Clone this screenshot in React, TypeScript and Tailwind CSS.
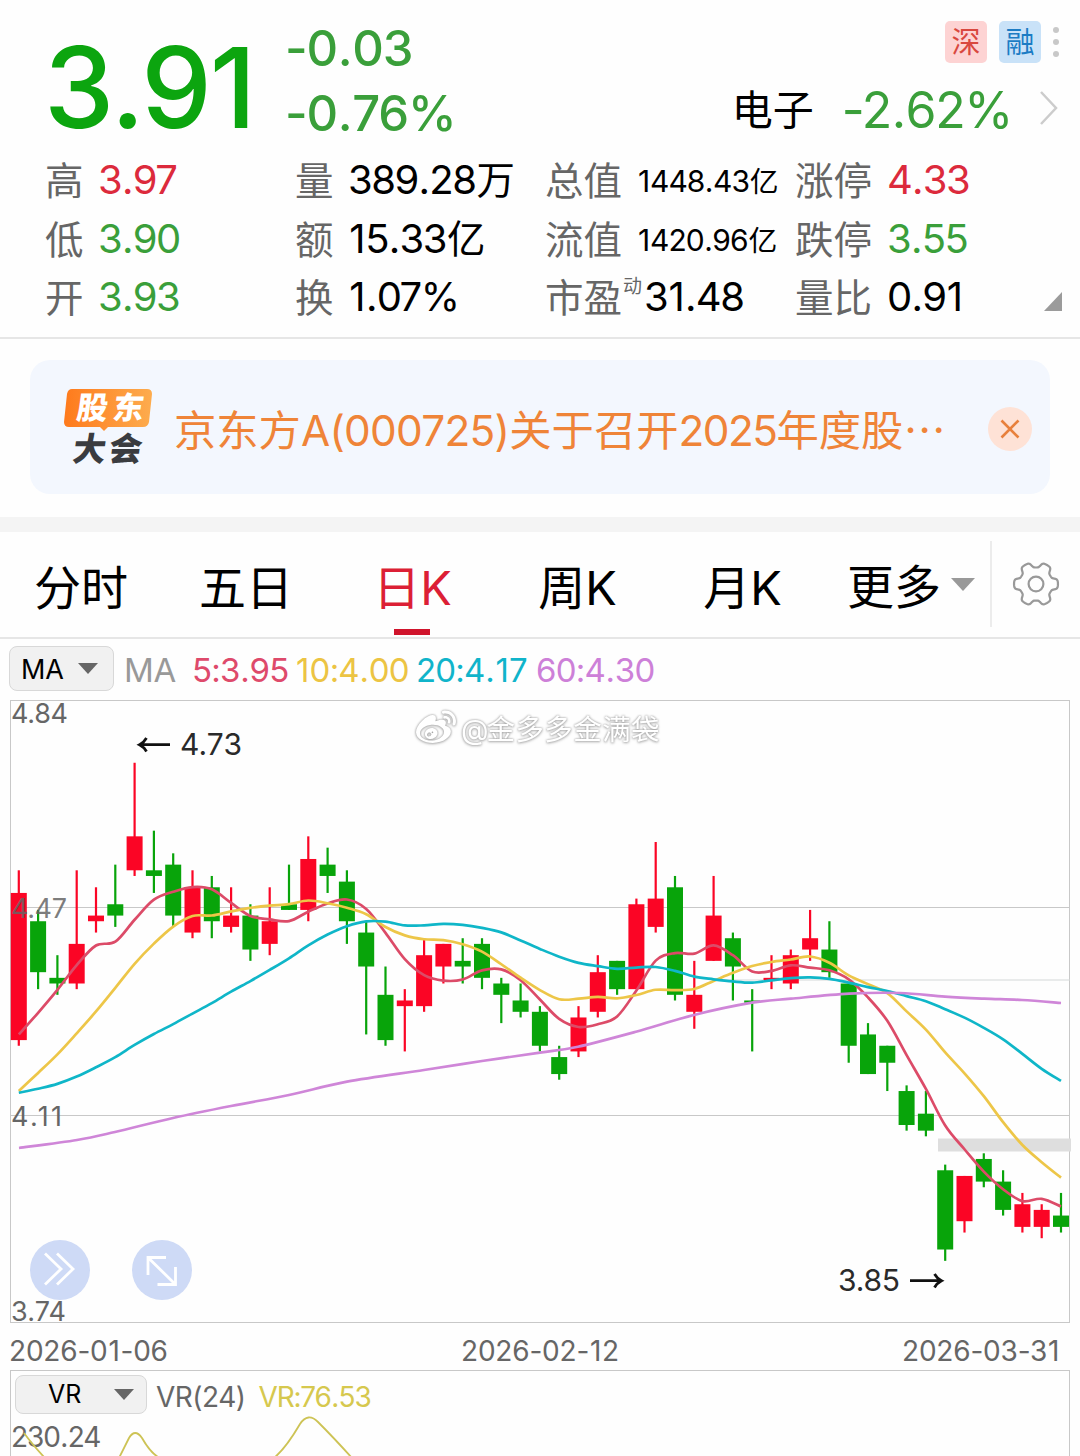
import type { ReactNode } from 'react'
import { FaWeibo } from 'react-icons/fa'

// ── Types ────────────────────────────────────────────────────────────────────

// open, close, high, low (in cents)
type Candle = [number, number, number, number]

interface Stat {
  label: string
  value: ReactNode
  color: string
}

// ── Data ─────────────────────────────────────────────────────────────────────

const CANDLES: Candle[] = [
  [424, 450, 454, 423], [445, 436, 447, 433], [435, 434, 439, 432], [434, 441, 454, 433],
  [445, 446, 451, 443], [448, 446, 455, 444], [454, 460, 473, 453], [454, 453, 461, 450],
  [455, 446, 457, 444], [443, 451, 454, 442], [451, 445, 453, 442], [444, 446, 451, 443],
  [446, 440, 448, 438], [441, 445, 451, 439], [448, 447, 455, 447], [447, 456, 460, 445],
  [455, 453, 458, 450], [452, 445, 454, 441], [443, 437, 445, 425], [432, 424, 437, 423],
  [430, 431, 433, 422], [430, 439, 442, 429], [437, 441, 441, 434], [438, 437, 442, 434],
  [441, 435, 442, 433], [434, 432, 435, 427], [431, 429, 434, 428], [429, 423, 430, 422],
  [421, 418, 423, 417], [422, 428, 430, 421], [429, 436, 439, 428], [438, 433, 438, 432],
  [433, 448, 449, 433], [444, 449, 459, 443], [451, 432, 453, 431], [429, 432, 438, 426],
  [438, 446, 453, 438], [442, 437, 443, 431], [431, 430.6, 433, 422], [434.6, 435, 439, 433],
  [434, 439, 440, 433], [440, 442, 447, 438], [440, 436, 445, 435], [434, 423, 434, 420],
  [425, 418, 427, 418], [423, 420, 423, 415], [415, 409, 416, 408], [411, 408, 415, 407],
  [401, 387, 402, 385], [392, 400, 400, 390], [403, 399, 404, 398], [399, 394, 401, 393],
  [391, 395, 397, 390], [391, 394, 395, 389], [393, 391, 397, 390],
]

// averages that need closes from before the visible range
const MA5_HEAD = [425, 428.8, 432.8, 437.3]
const MA10_HEAD = [415, 418.2, 421.4, 425.2, 429, 433.2, 437.6, 441.1, 444.2]
const MA20_HEAD = [
  414.7, 415.4, 416.2, 417.5, 419.2, 420.9, 423.2, 425.1, 426.8, 428.7,
  430.5, 432.6, 434.4, 436.4, 438.4, 440.8, 442.7, 444.2, 445.1,
]

const MA60: [number, number][] = [
  [19, 1148], [77, 1140], [115, 1132], [173, 1118], [231, 1106], [289, 1095], [347, 1081.7],
  [424, 1070], [482, 1061], [540, 1052.7], [578, 1046.7], [636, 1031.7], [694, 1015],
  [752, 1002.7], [791, 998.7], [849, 993.7], [900, 993], [945, 996.7], [984, 998.7],
  [1022, 1000], [1061, 1003],
]

const RED = 'text-[#dc2a3c]'
const GREEN = 'text-[#3a9f3a]'

const STATS: Stat[][] = [
  [
    { label: '高', value: <Num v="3.97" />, color: RED },
    { label: '量', value: <><Num v="389.28" /><Unit>万</Unit></>, color: 'text-black' },
    { label: '总值', value: <Small><Num v="1448.43" /><Unit>亿</Unit></Small>, color: 'text-black' },
    { label: '涨停', value: <Num v="4.33" />, color: RED },
  ],
  [
    { label: '低', value: <Num v="3.90" />, color: GREEN },
    { label: '额', value: <><Num v="15.33" /><Unit>亿</Unit></>, color: 'text-black' },
    { label: '流值', value: <Small><Num v="1420.96" /><Unit>亿</Unit></Small>, color: 'text-black' },
    { label: '跌停', value: <Num v="3.55" />, color: GREEN },
  ],
  [
    { label: '开', value: <Num v="3.93" />, color: GREEN },
    { label: '换', value: <Num v="1.07%" />, color: 'text-black' },
    { label: '市盈', value: <PeValue />, color: 'text-black' },
    { label: '量比', value: <Num v="0.91" />, color: 'text-black' },
  ],
]

// ── Main Component ───────────────────────────────────────────────────────────

export default function App() {
  return (
    <div className="w-[1080px] h-[1456px] overflow-hidden bg-[#fefefe] font-['Inter','Noto_Sans_CJK_SC',sans-serif] text-black whitespace-nowrap">
      <QuoteHeader />
      <Notice />
      <div className="h-[15px] bg-[#f4f4f4]" />
      <PeriodTabs />
      <MaLegend />
      <CandleChart />
      <div className="flex h-[46px] pl-[9px] pt-[13px] text-[28px] leading-[28px] tracking-[-0.2px] text-[#666]">
        <span className="w-[452px]"><Num v="2026-01-06" /></span>
        <span className="w-[441px]"><Num v="2026-02-12" /></span>
        <Num v="2026-03-31" />
      </div>
      <VrPanel />
    </div>
  )
}

// ── Header ───────────────────────────────────────────────────────────────────

function QuoteHeader() {
  return (
    <header className="h-[339px] border-b-2 border-[#e6e6e6]">
      <div className="flex h-[151px] pl-[44px]">
        <div className="w-[241px] pt-[31px] text-[112px] leading-[112px] font-medium tracking-[-5.5px] text-[#0ca50f]">
          <Num v="3.91" />
        </div>
        <div className="pt-[24px] text-[49px] leading-[50px] font-medium tracking-[-1.2px] text-[#3a9f3a]">
          <div><Num v="-0.03" /></div>
          <div className="mt-[15px]"><Num v="-0.76%" /></div>
        </div>
        <div className="ml-auto pt-[21px] pr-[21px]">
          <div className="flex justify-end items-center">
            <Badge className="bg-[#fdd3d3] text-[#d9483f]">深</Badge>
            <Badge className="ml-[12px] bg-[#c9e2f8] text-[#1c7cc4]">融</Badge>
            <div className="flex flex-col gap-[6px] ml-[12px]">
              <i className="size-[6px] rounded-full bg-[#c8c8c8]" />
              <i className="size-[6px] rounded-full bg-[#c8c8c8]" />
              <i className="size-[6px] rounded-full bg-[#c8c8c8]" />
            </div>
          </div>
          <div className="flex items-center mt-[22px] h-[50px]">
            <span className="text-[41px] leading-[50px]">电子</span>
            <span className="ml-[28px] text-[50px] leading-[50px] tracking-[-1.4px] text-[#3a9f3a]"><Num v="-2.62%" /></span>
            <svg className="ml-[27px] -mt-[5px]" width="20" height="36" viewBox="0 0 20 36">
              <path d="M2 2 L17 18 L2 34" fill="none" stroke="#ccc" strokeWidth="2.5" />
            </svg>
          </div>
        </div>
      </div>
      <div className="flex">
        <div className="grid grid-rows-[59px_59px_58px]">
          {STATS.map((row, i) => (
            <div key={i} className="grid grid-cols-[250px_250px_250px_240px] pl-[45px]">
              {row.map((s, j) => (
                <div key={s.label} className="flex items-center">
                  <span className={`${j < 2 ? 'w-[53px]' : 'w-[92px]'} text-[38.5px] leading-[58px] text-[#666]`}>{s.label}</span>
                  <span className={`-mt-[2px] text-[40px] leading-[58px] tracking-[-1.5px] ${s.color}`}>{s.value}</span>
                </div>
              ))}
            </div>
          ))}
        </div>
        <svg className="ml-[9px] mt-[141px] shrink-0" width="18" height="19" viewBox="0 0 18 19">
          <path d="M18 0 V19 H0 Z" fill="#9b9b9b" />
        </svg>
      </div>
    </header>
  )
}

// Figures with a little extra room around the point and the narrow "1"
function Num({ v }: { v: string }) {
  return (
    <span>
      {v.split('').map((ch, i) =>
        ch === '.' ? <span key={i} className="px-[0.018em]">.</span>
          : ch === '1' ? <span key={i} className="px-[0.03em]">1</span>
          : ch
      )}
    </span>
  )
}

function Badge({ className, children }: { className: string; children: ReactNode }) {
  return (
    <span className={`flex items-center justify-center w-[42px] h-[42px] rounded-[5px] text-[29px] leading-none ${className}`}>
      {children}
    </span>
  )
}

function Unit({ children }: { children: ReactNode }) {
  return <span className="ml-[0.03em] tracking-normal text-[0.96em]">{children}</span>
}

function Small({ children }: { children: ReactNode }) {
  return <span className="text-[30px] tracking-[-1px]">{children}</span>
}

function PeValue() {
  return (
    <span className="flex -ml-[14px]">
      <span className="w-[21px] -mt-[10px] text-[19px] tracking-normal text-[#666]">动</span>
      <Num v="31.48" />
    </span>
  )
}

// ── Notice ───────────────────────────────────────────────────────────────────

function Notice() {
  return (
    <div className="h-[178px] pt-[21px] px-[30px]">
      <div className="flex items-center h-[134px] pt-[3px] pl-[34px] pr-[18px] rounded-[20px] bg-[#f3f7fe] text-[#ef8438]">
        <svg width="90" height="84" viewBox="0 0 90 84">
          <defs>
            <linearGradient id="tag" x1="0" x2="1">
              <stop offset="0" stopColor="#fe7a1c" />
              <stop offset="1" stopColor="#fdac4e" />
            </linearGradient>
          </defs>
          <path d="M8 2 H83 Q88 2 88 7 L85 35 Q84 40 79 40 H44 L40 44 L36 40 H5 Q0 40 0 35 L3 7 Q4 2 8 2 Z" fill="url(#tag)" />
          <text x="12" y="32" transform="skewX(-8) translate(4 0)" fontSize="31" fontWeight="900" fill="#fff" textLength="67">股东</text>
          <text x="9" y="74" transform="skewX(-8) translate(9 0)" fontSize="33" fontWeight="900" fill="#3a3c40" textLength="69">大会</text>
        </svg>
        <div className="ml-[20px] mt-[5px] text-[42.3px] leading-[60px]">
          京东方<span className="tracking-[-0.7px]">A(000725)</span>关于召开<span className="tracking-[-1.5px]">2025</span>年度股⋯
        </div>
        <span className="flex items-center justify-center size-[44px] ml-auto rounded-full bg-[#fee2d6]">
          <svg width="20" height="20" viewBox="0 0 20 20">
            <path d="M1.5 1.5 L18.5 18.5 M18.5 1.5 L1.5 18.5" stroke="#e8803c" strokeWidth="2.6" />
          </svg>
        </span>
      </div>
    </div>
  )
}

// ── Tabs ─────────────────────────────────────────────────────────────────────

function PeriodTabs() {
  return (
    <nav className="flex h-[107px] border-b-2 border-[#e6e6e6] text-[47px] leading-[112px]">
      <span className="w-[165px] pl-[34px]">分时</span>
      <span className="w-[165px] pl-[34px]">五日</span>
      <span className="relative w-[165px] text-center text-[#dc1f35]">
        日K
        <i className="absolute left-[64px] bottom-[2px] w-[36px] h-[6px] bg-[#d0142c]" />
      </span>
      <span className="w-[165px] text-center">周K</span>
      <span className="w-[165px] text-center">月K</span>
      <span className="flex items-center w-[165px] pl-[22px]">
        <span className="mt-[4px]">更多</span>
        <svg className="ml-[10px]" width="24" height="13" viewBox="0 0 24 13">
          <path d="M0 0 H24 L12 13 Z" fill="#999" />
        </svg>
      </span>
      <span className="flex items-center justify-center w-[90px] h-[86px] mt-[9px] border-l-2 border-[#ececec]">
        <Gear />
      </span>
    </nav>
  )
}

function Gear() {
  const pts: string[] = []
  for (let d = 0; d < 360; d += 3) {
    const t = (d * Math.PI) / 180
    const r = 19.2 + 2.8 * Math.tanh(2.2 * Math.cos(6 * t) + 0.3)
    pts.push(`${(24 + r * Math.cos(t)).toFixed(2)} ${(24 + r * Math.sin(t)).toFixed(2)}`)
  }
  return (
    <svg width="48" height="48" viewBox="0 0 48 48" fill="none" stroke="#999" strokeWidth="2.2" strokeLinejoin="round">
      <path d={`M${pts.join('L')}Z`} />
      <circle cx="24" cy="24" r="7.4" />
    </svg>
  )
}

// ── MA legend ────────────────────────────────────────────────────────────────

function MaLegend() {
  return (
    <div className="flex items-center h-[61px] pt-[2px] pl-[9px] text-[33px] leading-[59px] tracking-[-0.8px]">
      <span className="flex items-center w-[105px] h-[45px] -mt-[4px] pt-[2px] pl-[11px] rounded-[8px] border border-[#d8d8d8] bg-[#f1f1f1] text-[27px] tracking-[-0.2px]">
        MA
        <Caret className="ml-[14px] mb-[2px]" />
      </span>
      <span className="w-[69px] pl-[10px] tracking-[-0.3px] text-[#999]">MA</span>
      <span className="w-[103px] pl-[9px] text-[#de4a6b]"><Num v="5:3.95" /></span>
      <span className="w-[121px] pl-[9px] text-[#ecc443]"><Num v="10:4.00" /></span>
      <span className="w-[120px] pl-[9px] text-[#10b4ca]"><Num v="20:4.17" /></span>
      <span className="pl-[9px] text-[#cd80d8]"><Num v="60:4.30" /></span>
    </div>
  )
}

function Caret({ className }: { className: string }) {
  return (
    <svg className={className} width="20" height="11" viewBox="0 0 20 11">
      <path d="M0 0 H20 L10 11 Z" fill="#666" />
    </svg>
  )
}

// ── Candle chart ─────────────────────────────────────────────────────────────

function CandleChart() {
  const closes = CANDLES.map(c => c[1])
  const line = (head: number[], n: number) =>
    smooth(soften(movingAverage(head, closes, n)).map((v, i) => [xAt(i), yAt(v)]))

  return (
    <div className="relative h-[624px]">
      <svg className="overflow-visible" width="1080" height="624" viewBox="0 700 1080 624">
        <g fill="none" stroke="#c8c8c8" strokeWidth="1">
          <rect x="10.5" y="700.5" width="1059" height="622" />
          <path d="M10 907.5 H1070 M10 1115.5 H1070" />
          <path d="M720 980 H1070" stroke="#d4d8d8" />
        </g>
        <rect x="938" y="1138.5" width="133" height="13" fill="#dedede" />

        {/* Candles */}
        {CANDLES.map(([open, close, high, low], i) => {
          const color = close > open ? '#fb0525' : '#08a40a'
          const x = xAt(i)
          const top = yAt(Math.max(open, close))
          return (
            <g key={i} fill={color}>
              <rect x={x - 1.1} y={yAt(high)} width={2.2} height={yAt(low) - yAt(high)} />
              <rect x={x - 8} y={top} width={16} height={yAt(Math.min(open, close)) - top} />
            </g>
          )
        })}

        {/* Averages */}
        <g fill="none" strokeWidth="2.7">
          <path d={line(MA5_HEAD, 5)} stroke="#dc4b68" />
          <path d={line(MA10_HEAD, 10)} stroke="#edc648" />
          <path d={line(MA20_HEAD, 20)} stroke="#0fb6c8" />
          <path d={smooth(MA60)} stroke="#cf86d8" />
        </g>

        {/* Axis labels */}
        <g fontSize="27" fill="#666">
          <text x="11" y="722.500" textLength="57">4.84</text>
          <text x="11" y="917.5" textLength="56" fillOpacity="0.85">4.47</text>
          <text x="11" y="1126" textLength="51">4.11</text>
          <text x="11" y="1321" textLength="55">3.74</text>
        </g>
        <g fontSize="30" fill="#2a2a2a">
          <text x="180" y="754.500" textLength="62">4.73</text>
          <text x="838" y="1290.500" textLength="62">3.85</text>
        </g>
        <g fill="none" stroke="#111" strokeWidth="2.7">
          <path d="M170 744.7 H140 M146.500 738 Q144 742.5 139.500 744.7 Q144 747 146.500 751.500" />
          <path d="M910 1280.7 H941 M934.500 1274 Q937 1278.500 941.500 1280.7 Q937 1283 934.500 1287.500" />
        </g>

        {/* Overlay buttons */}
        <g fill="none" stroke="#fff" strokeWidth="2.8">
          <circle cx="60" cy="1270" r="30" fill="#cedaf6" stroke="none" />
          <circle cx="162" cy="1270" r="30" fill="#cedaf6" stroke="none" />
          <path d="M45 1253.500 L61 1269 L45 1284.500 M57 1253.500 L73 1269 L57 1284.500" />
          <path d="M148 1275 V1257.500 H166 M148 1257.500 L175.500 1284.500 M175.500 1267 V1284.500 H157.500" />
        </g>
      </svg>

      {/* Watermark */}
      <div className="absolute left-[416px] top-[10px] flex items-center text-[28.5px] leading-[40px] text-white [filter:drop-shadow(0_0_1px_#999)_drop-shadow(0_1px_1px_#ccc)]">
        <FaWeibo size={40} className="mr-[5px] -mt-[4px]" />
        <span className="tracking-[-2px]">@</span><span className="tracking-[0.4px]">金多多金满袋</span>
      </div>
    </div>
  )
}

// ── VR panel ─────────────────────────────────────────────────────────────────

function VrPanel() {
  return (
    <div className="relative h-[86px] ml-[10px] mr-[10px] border border-b-0 border-[#c8c8c8] text-[28px] text-[#666]">
      <div className="flex items-center h-[51px] pl-[4px]">
        <span className="flex items-center w-[132px] h-[39px] -mt-[4px] pt-px pl-[32px] rounded-[8px] border border-[#d8d8d8] bg-[#f1f1f1] text-[25px] text-black">
          VR
          <Caret className="ml-[33px] mb-[2px]" />
        </span>
        <span className="ml-[9px] tracking-[-0.5px]">VR(24)</span>
        <span className="ml-[13px] tracking-[-1.2px] text-[#d6c84e]"><Num v="VR:76.53" /></span>
      </div>
      <div className="leading-[30px] tracking-[-1.1px]"><Num v="230.24" /></div>
      <svg className="absolute left-0 top-0" width="1058" height="86" viewBox="11 1371 1058 86" fill="none" stroke="#cdc355" strokeWidth="1.8">
        <path d="M24 1433 Q32 1444 44 1457" />
        <path d="M119 1458 L129 1438 Q135 1428 142 1438 Q150 1452 158 1457" />
        <path d="M274 1458 Q286 1448 300 1424 Q308 1412 318 1422 Q334 1438 352 1458" />
      </svg>
    </div>
  )
}

// ── Helpers ──────────────────────────────────────────────────────────────────

function xAt(i: number): number {
  return 18.8 + i * 19.3
}

function yAt(cents: number): number {
  return 700.5 + (484 - cents) * 5.66
}

function movingAverage(head: number[], closes: number[], n: number): number[] {
  return closes.map((_, i) =>
    i < n - 1 ? head[i] : closes.slice(i - n + 1, i + 1).reduce((a, b) => a + b, 0) / n
  )
}

// Rounds off the peaks a little, end points stay in place
function soften(v: number[]): number[] {
  return v.map((b, i) =>
    i === 0 || i === v.length - 1 ? b : 0.14 * v[i - 1] + 0.72 * b + 0.14 * v[i + 1]
  )
}

// Catmull-Rom spline through the points
function smooth(p: number[][]): string {
  let d = `M${p[0][0]} ${p[0][1]}`
  for (let i = 0; i < p.length - 1; i++) {
    const a = p[Math.max(i - 1, 0)]
    const b = p[i]
    const c = p[i + 1]
    const e = p[Math.min(i + 2, p.length - 1)]
    d += `C${b[0] + (c[0] - a[0]) / 6} ${b[1] + (c[1] - a[1]) / 6} ${c[0] - (e[0] - b[0]) / 6} ${c[1] - (e[1] - b[1]) / 6} ${c[0]} ${c[1]}`
  }
  return d
}
